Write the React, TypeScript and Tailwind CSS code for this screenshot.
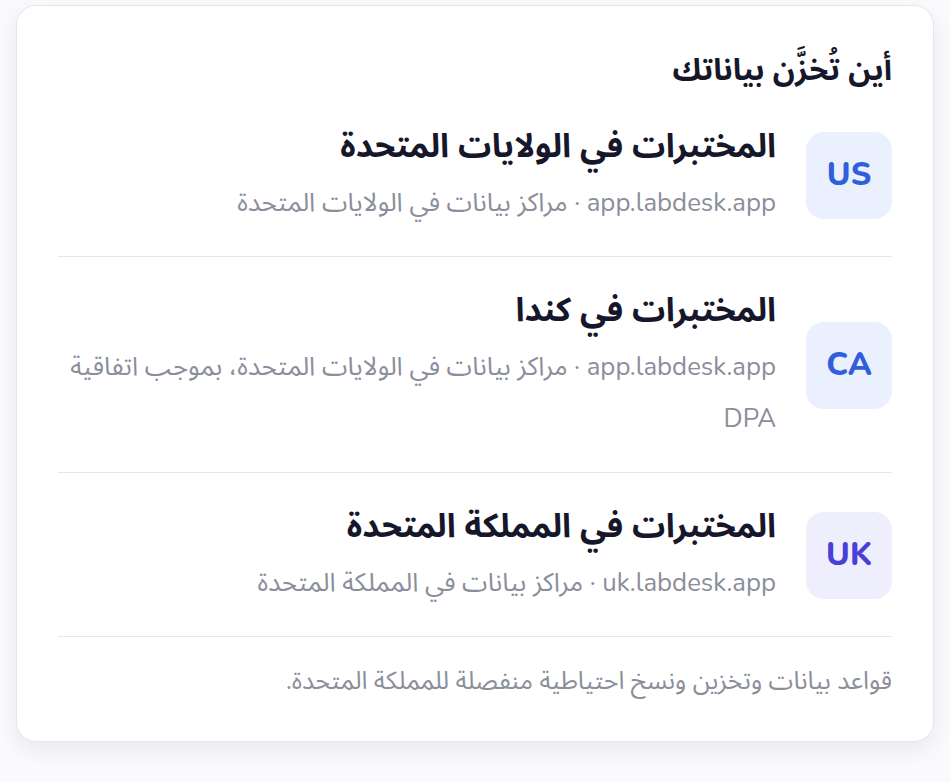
import React from "react";

const rows = [
  {
    code: "US",
    title: "المختبرات في الولايات المتحدة",
    sub: "app.labdesk.app · مراكز بيانات في الولايات المتحدة",
    badge: "bg-[#eaf0fd] text-[#2f5fda]",
  },
  {
    code: "CA",
    title: "المختبرات في كندا",
    sub: "app.labdesk.app · مراكز بيانات في الولايات المتحدة، بموجب اتفاقية DPA",
    badge: "bg-[#eaf0fd] text-[#2f5fda]",
  },
  {
    code: "UK",
    title: "المختبرات في المملكة المتحدة",
    sub: "uk.labdesk.app · مراكز بيانات في المملكة المتحدة",
    badge: "bg-[#eeeefc] text-[#4a3fd6]",
  },
];

export default function App() {
  return (
    <div
      className="min-h-[782px] w-[950px] bg-[#fafafc] pt-[5px] pl-[16px]"
      style={{ fontFamily: '"Nunito", "Noto Sans Arabic", "Noto Sans", "DejaVu Sans", sans-serif' }}
    >
      <div
        dir="rtl"
        className="w-[918px] h-[737px] rounded-[20px] border border-[#e4e6f3] bg-white shadow-[0_8px_20px_rgba(30,40,90,0.08)] px-[41px] pt-[44px]"
      >
        <h2 className="text-[30.5px] leading-[40px] font-bold text-[#16172b]">أين تُخزَّن بياناتك</h2>
        <div className="mt-[31px]">
          {rows.map((r, i) => (
            <div key={r.code} className={`flex items-center gap-[30px] ${i === 0 ? "pb-[27px]" : "pt-[28px] pb-[27px]"} border-b border-[#e6e7ec]`}>
              <div className={`w-[86px] h-[87px] shrink-0 rounded-[18px] flex items-center justify-center text-[32px] font-extrabold ${r.badge}`}>
                {r.code}
              </div>
              <div className="flex-1">
                <div className="text-[33px] leading-[52px] font-bold text-[#16172b]">{r.title}</div>
                <div className="mt-[4px] text-[25.8px] leading-[52px] text-[#8b8e9b]">{r.sub}</div>
              </div>
            </div>
          ))}
        </div>
        <p className="mt-[30px] text-[25px] leading-[28px] text-[#8b8e9b]">قواعد بيانات وتخزين ونسخ احتياطية منفصلة للمملكة المتحدة.</p>
      </div>
    </div>
  );
}
